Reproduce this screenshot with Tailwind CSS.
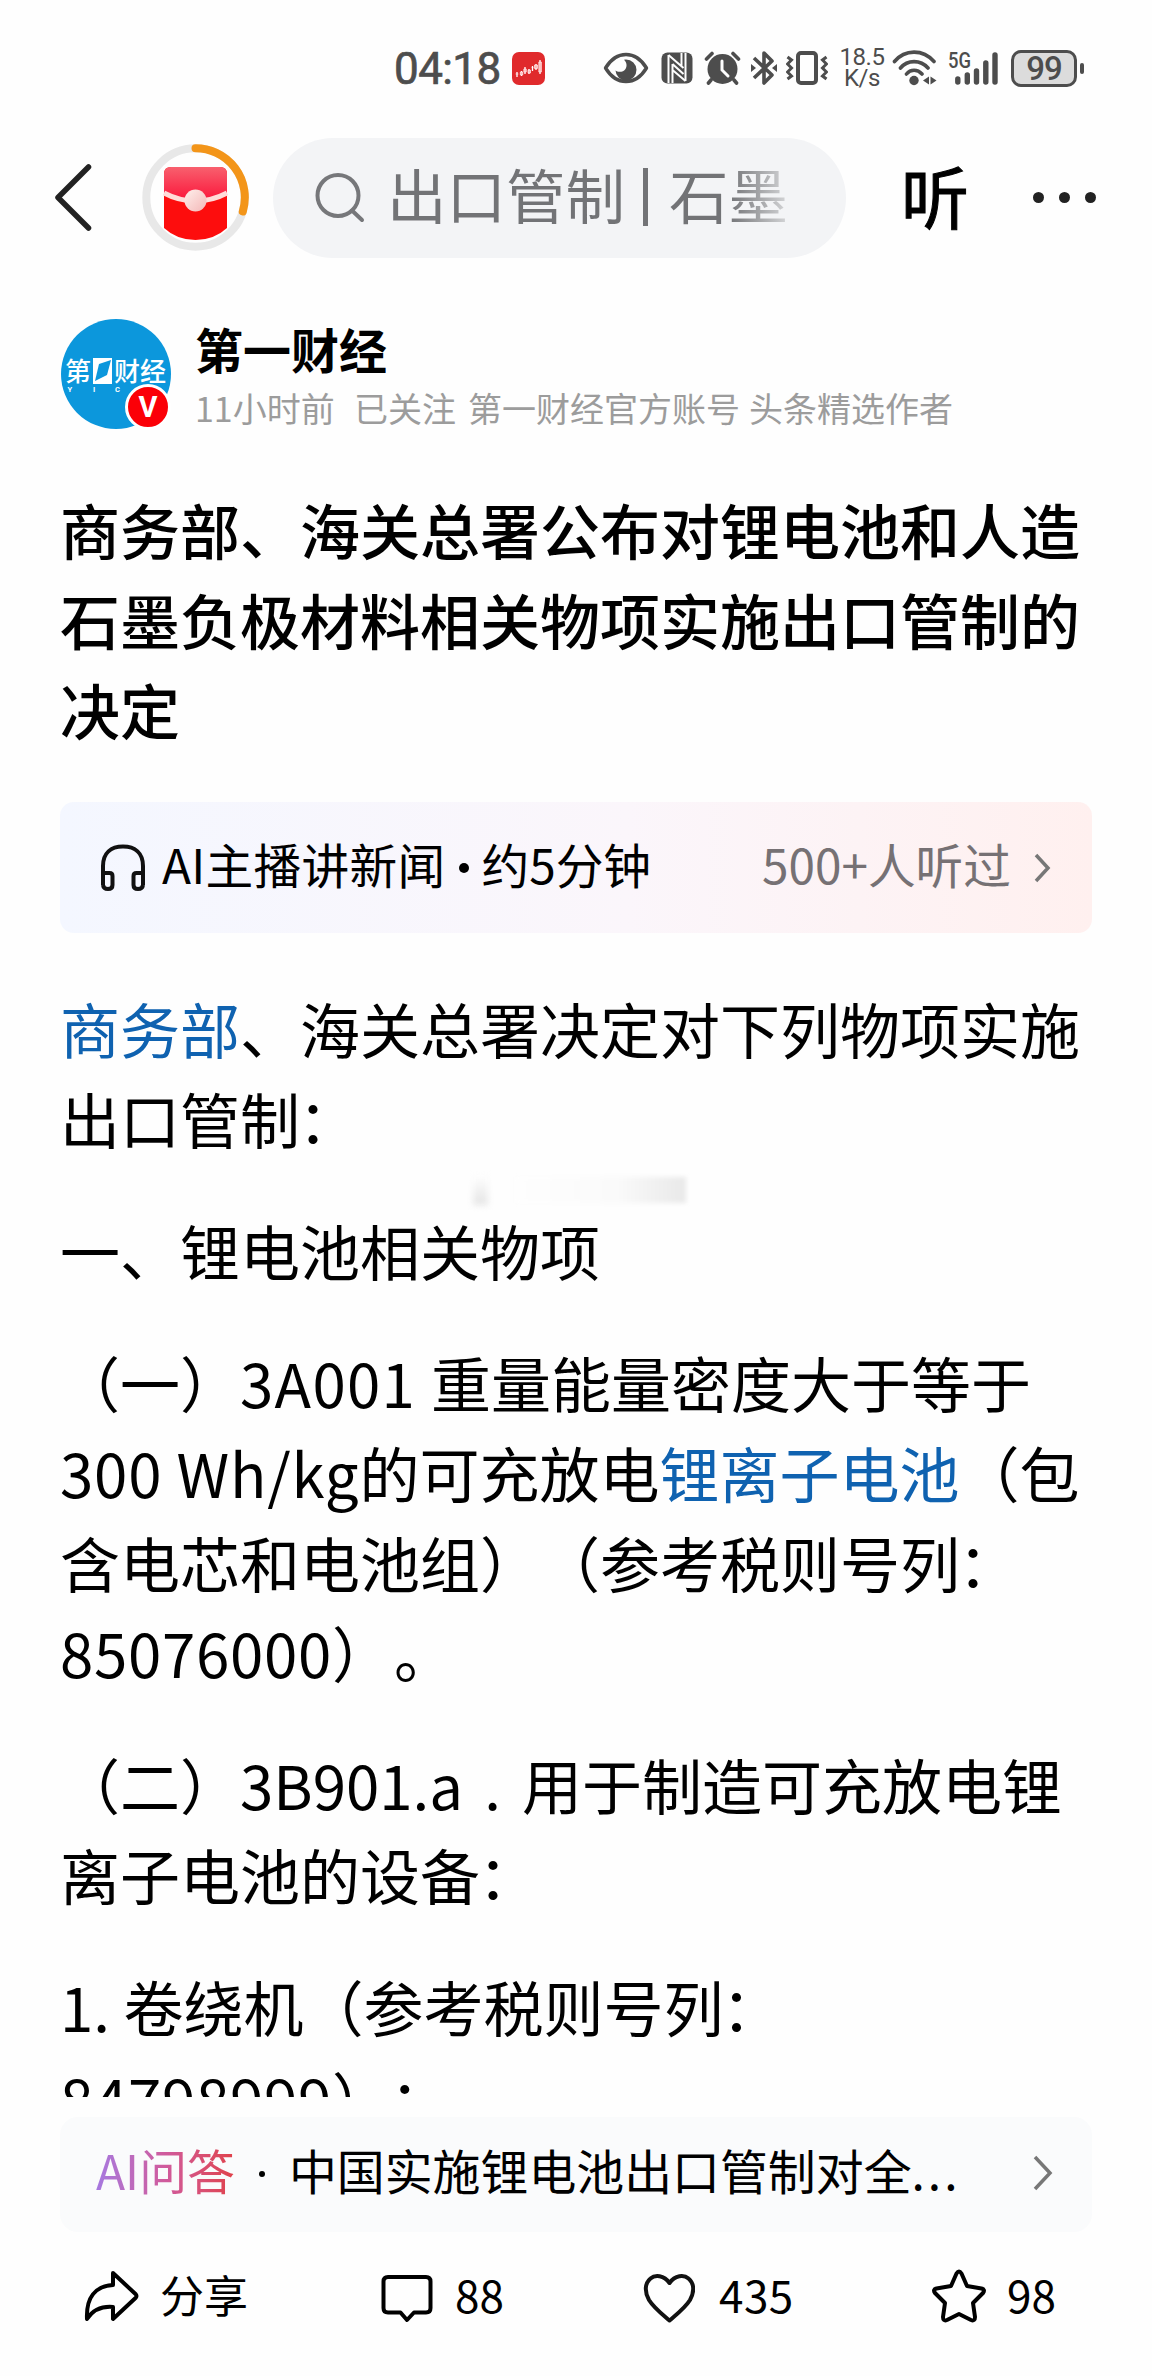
<!DOCTYPE html>
<html lang="zh-CN">
<head>
    <meta charset="UTF-8">
    <meta name="viewport" content="width=device-width, initial-scale=1.0">
    <title>第一财经</title>
    <script src="https://cdn.jsdelivr.net/npm/@tailwindcss/browser@4"></script>
</head>
<body class="bg-[#fefefe]">
<div class="relative flex flex-col w-[1152px] h-[2376px] overflow-hidden text-black font-['Noto_Sans_CJK_SC',sans-serif] [text-spacing-trim:space-all]">

    <!-- Status bar -->
    <div class="flex items-center h-[136px] shrink-0 pl-[394px] text-[#4d4d4d]">
        <span class="w-[118px] pt-[2px] font-['Roboto'] text-[44px] leading-none tracking-[-0.6px] [-webkit-text-stroke:0.7px_currentColor]">04:18</span>
        <svg class="w-[33px] h-[33px]" viewBox="0 0 33 33">
            <rect width="33" height="33" rx="7" fill="#e02a2c"/>
            <path d="M5 20v5M9.500 19v5M13 15v7M17 17v5M20.500 14v5M24 12v6M28 8v14" stroke="#fff" stroke-width="1.300"/>
            <path d="M3.500 22h3M8.300 20h2.500v3H8.300zM11.800 17h2.500v3h-2.500zM16 18h2.500v3H16zM19.500 15.500h2M22.500 13h3v3.500h-3zM26.800 10h2.600v10h-2.600z" fill="#fbb" stroke="#fff" stroke-width=".6"/>
        </svg>
        <!-- eye -->
        <svg class="ml-[58px] w-[46px] h-[32px]" viewBox="0 0 46 32" fill="none">
            <path d="M2.500 16C8 7 15 2.500 23 2.500S38 7 43.500 16C38 25 31 29.500 23 29.500S8 25 2.500 16Z" stroke="currentColor" stroke-width="3.400" stroke-linejoin="round"/>
            <path d="M23 7.500a10.500 10.500 0 1 1-10.500 11c2 2 8 2 10-1.500 2-3.500 1-7-1.500-9.300Z" fill="currentColor"/>
        </svg>
        <!-- nfc -->
        <svg class="ml-[12px] w-[32px] h-[32px]" viewBox="0 0 32 32">
            <rect x=".5" y=".5" width="31" height="31" rx="6" fill="currentColor"/>
            <path d="M7.500 31V3M24.500 1v28" stroke="#fefefe" stroke-width="2"/>
            <path d="M7.500 3l15 13M11.500 12l11 10M11.500 18l13 11M11.500 12v19M20.500 1v13" stroke="#fefefe" stroke-width="2"/>
        </svg>
        <!-- alarm -->
        <svg class="ml-[11px] w-[37px] h-[35px]" viewBox="0 0 37 35" fill="none" stroke-linecap="round">
            <circle cx="18.500" cy="18" r="15" fill="currentColor"/>
            <path d="M2.500 8L8 2.500M34.500 8L29 2.500M7 29l-2.500 3M30 29l2.500 3" stroke="currentColor" stroke-width="3.600"/>
            <path d="M18 10v9l6 6" stroke="#fefefe" stroke-width="3"/>
        </svg>
        <!-- bluetooth -->
        <svg class="ml-[10px] w-[26px] h-[36px]" viewBox="0 0 26 36" fill="none">
            <path d="M3 8l18 17-8 8V3l8 8L3 28" stroke="currentColor" stroke-width="3.600" stroke-linejoin="round"/>
            <path d="M0 14l5 4-5 4zM26 14l-5 4 5 4z" fill="currentColor"/>
        </svg>
        <!-- vibrate -->
        <svg class="ml-[9px] w-[42px] h-[34px]" viewBox="0 0 42 34" fill="none" stroke="currentColor">
            <rect x="12" y="2" width="18" height="30" rx="3" stroke-width="4"/>
            <path d="M1.500 6l4 3-4 4 4 4-4 4 4 4-4 3M40.500 6l-4 3 4 4-4 4 4 4-4 4 4 3" stroke-width="3"/>
        </svg>
        <div class="ml-[9px] w-[50px] text-center font-['Roboto'] text-[24px] leading-[21px] tracking-[-0.5px]">18.5<br>K/s</div>
        <!-- wifi -->
        <svg class="ml-[5px] w-[46px] h-[36px]" viewBox="0 0 46 36" fill="none">
            <path d="M2.500 11.500C13-1 31-1 42 11.500M8.500 18c7-8.500 20-8.500 27.500 0M14.500 24c4-5 11-5 15.500 0" stroke="currentColor" stroke-width="3.600" stroke-linecap="round"/>
            <circle cx="22" cy="30.500" r="4.700" fill="currentColor"/>
            <path d="M31 30.500l6-4v8zM44.500 30.500l-6-4v8z" fill="currentColor"/>
        </svg>
        <!-- mobile signal -->
        <svg class="ml-[10px] w-[51px] h-[36px] overflow-visible" viewBox="0 0 51 36">
            <text x="0" y="18" font-family="Roboto" font-weight="500" font-size="22" textLength="23" lengthAdjust="spacingAndGlyphs" fill="currentColor">5G</text>
            <path d="M9.800 29v3M19.300 25v7M28.500 21v11M37.800 13v19M47 5v27" stroke="currentColor" stroke-width="5.400" stroke-linecap="round"/>
        </svg>
        <div class="ml-[12px] flex items-center justify-center w-[66px] h-[37px] rounded-[10px] border-[3px] border-current bg-[#dcdcdc] font-['Roboto'] font-medium text-[33px] leading-none tracking-[-1px]">99</div>
        <div class="ml-[3px] w-[4px] h-[11px] rounded-full bg-[#4d4d4d]"></div>
    </div>

    <!-- Search header -->
    <div class="flex items-center h-[124px] shrink-0 pl-[54px]">
        <svg class="w-[38px] h-[68px]" viewBox="0 0 38 68" fill="none"><path d="M34.500 3L4 33.500 34.500 64" stroke="#222" stroke-width="5.500" stroke-linecap="round" stroke-linejoin="round"/></svg>
        <svg class="ml-[50px] -mt-[1px] w-[107px] h-[107px]" viewBox="0 0 107 107" fill="none">
            <defs>
                <linearGradient id="flap" x1="0" y1="0" x2="0" y2="1"><stop stop-color="#f8606e"/><stop offset="1" stop-color="#fb1238"/></linearGradient>
                <linearGradient id="seal" x1="0" y1="0" x2="1" y2="1"><stop stop-color="#fff0ec"/><stop offset="1" stop-color="#f3b7b7"/></linearGradient>
            </defs>
            <circle cx="53.500" cy="53.500" r="49.200" stroke="#e8e8e8" stroke-width="8"/>
            <path d="M53.500 4.300A49.200 49.200 0 0 1 100.800 67.500" stroke="#f39519" stroke-width="8" stroke-linecap="round"/>
            <path d="M22 30q0-7 7-7h49q7 0 7 7v54q-13 12-31.500 12T22 84Z" fill="#fd0d0d"/>
            <path d="M22 30q0-7 7-7h49q7 0 7 7v20q-15 8-31.500 8T22 50Z" fill="url(#flap)"/>
            <path d="M22 49q15 8 31.500 8T85 49" stroke="#ffdcd9" stroke-width="5"/>
            <circle cx="53.500" cy="56.500" r="11" fill="url(#seal)"/>
        </svg>
        <div class="ml-[24px] flex items-center w-[573px] h-[120px] rounded-full bg-[#f3f4f6] pl-[42px]">
            <svg class="w-[50px] h-[50px]" viewBox="0 0 50 50" fill="none" stroke="#76777a" stroke-width="4" stroke-linecap="round"><circle cx="23" cy="22.500" r="20.500"/><path d="M37 37.500l10 9.500"/></svg>
            <div class="ml-[22px] -mt-[10px] flex items-center text-[59.500px] leading-[90px] text-transparent bg-clip-text bg-linear-to-r from-[#727376] from-85% to-[#d5d6d8]">
                <span>出口管制</span><span class="ml-[18px] mr-[21px] mt-[7px] w-[5px] h-[58px] bg-[#727376]"></span><span>石墨</span>
            </div>
        </div>
        <span class="ml-[55px] -mt-[7px] text-[68px] leading-[90px] [-webkit-text-stroke:1px_#000]">听</span>
        <div class="ml-[64px] -mt-[2px] flex gap-[15px]">
            <span class="size-[11px] rounded-full bg-[#222]"></span>
            <span class="size-[11px] rounded-full bg-[#222]"></span>
            <span class="size-[11px] rounded-full bg-[#222]"></span>
        </div>
    </div>

    <!-- Scrolling article, cut off above the AI bar -->
    <div class="relative h-[1837px] shrink-0 overflow-hidden px-[60px] pt-[59px]">
        <div class="flex h-[110px]">
            <div class="relative w-[111px] h-[110px] shrink-0">
                <svg class="ml-px w-[110px] h-[110px]" viewBox="0 0 110 110">
                    <circle cx="55" cy="55" r="55" fill="#0c97dc"/>
                    <g fill="#fff" font-family="Noto Sans CJK SC" font-weight="500">
                        <text x="4" y="62" font-size="26">第</text>
                        <text x="53" y="62" font-size="26">财经</text>
                    </g>
                    <g fill="#fff" font-family="Roboto" font-weight="700" font-size="7.500">
                        <text x="6.500" y="73">Y</text>
                        <text x="32" y="73">I</text>
                        <text x="54" y="73">C</text>
                    </g>
                    <rect x="32" y="39" width="19" height="26" fill="#fff"/>
                    <path d="M34 62l4-17 12-4-4 15z" fill="#0c97dc"/>
                </svg>
                <span class="absolute left-[65px] top-[65px] flex items-center justify-center w-[46px] h-[46px] rounded-full border-[3px] border-white bg-[#fb0007] text-white font-['Roboto'] font-bold text-[29px] leading-none">V</span>
            </div>
            <div class="ml-[24px]">
                <div class="text-[48px] leading-[58px] font-bold">第一财经</div>
                <div class="flex pt-[3px] text-[34px] leading-[56px] text-[#9c9c9c] whitespace-nowrap">
                    <span class="w-[159px]">11小时前</span><span class="w-[114px]">已关注</span><span class="w-[281px]">第一财经官方账号</span><span>头条精选作者</span>
                </div>
            </div>
        </div>

        <h1 class="mt-[55px] w-[1040px] text-[60px] leading-[90px] font-medium">商务部、海关总署公布对锂电池和人造石墨负极材料相关物项实施出口管制的决定</h1>

        <div class="mt-[48px] flex items-center h-[131px] rounded-[14px] pl-[40px] pr-[41px] text-[47.700px] bg-linear-to-r from-[#f4f7ff] via-[#fbf6fb] via-55% to-[#fff0ef]">
            <svg class="w-[46px] h-[48px] mb-px" viewBox="0 0 46 48" fill="none" stroke="#111" stroke-width="4" stroke-linejoin="round">
                <path d="M3 42V23C3 10 11 3.500 23 3.500S43 10 43 23v19"/>
                <path d="M3 30h6.500q3 0 3 3v9q0 4-4.500 4T3 42M43 30h-6.500q-3 0-3 3v9q0 4 4.500 4t5-4"/>
            </svg>
            <span class="ml-[16px] -mt-[8px] tracking-[0.300px]">AI主播讲新闻</span>
            <span class="ml-[13px] mr-[13px] size-[10px] rounded-full bg-black"></span>
            <span class="-mt-[8px]">约5分钟</span>
            <span class="ml-auto -mt-[8px] text-[#767174]">500+人听过</span>
            <svg class="ml-[23px] w-[17px] h-[30px]" viewBox="0 0 17 30" fill="none" stroke="#777" stroke-width="3.500"><path d="M2 2l12 13L2 28"/></svg>
        </div>

        <div class="mt-[50px] w-[1040px] flex flex-col gap-[42.500px] text-[60px] leading-[89.800px]">
            <p><span class="text-[#0f62b0]">商务部</span>、海关总署决定对下列物项实施<br>出口管制<span class="-ml-[2px]">：</span></p>
            <p>一、锂电池相关物项</p>
            <p>（一）<span class="tracking-[1.300px]">3A001 </span>重量能量密度大于等于<br><span class="tracking-[0.800px]">300 Wh/kg</span>的可充放电<span class="text-[#0f62b0]">锂离子电池</span>（包<br>含电芯和电池组）（参考税则号列<span class="-ml-[2px]">：</span><br><span class="tracking-[0.700px]">85076000</span>）<span class="ml-[2px]">。</span></p>
            <p>（二）3B901.a<span class="inline-block w-[59px] text-center">.</span>用于制造可充放电锂<br>离子电池的设备<span class="-ml-[2px]">：</span></p>
            <p>1. 卷绕机（参考税则号列<span class="-ml-[2px]">：</span><br><span class="inline-block pt-[2px] tracking-[0.700px]">84798999）<span class="-ml-[3px]">；</span></span></p>
        </div>

        <!-- faded image placeholder -->
        <div class="absolute left-[473px] top-[915px] w-[15px] h-[30px] blur-[3px] bg-linear-to-b from-white to-[#e4e4e4]"></div>
        <div class="absolute left-[515px] top-[917px] w-[171px] h-[26px] blur-[2px] bg-linear-to-r from-[#fefefe] via-[#fafafa] via-60% to-[#e9e9e9]"></div>
    </div>

    <!-- AI question bar -->
    <div class="mt-[20px] mx-[60px] flex items-center h-[115px] shrink-0 rounded-[18px] bg-[#fafbfc] pl-[36px] pr-[39px] text-[47.900px]">
        <span class="-mt-[9px] text-transparent bg-clip-text bg-linear-to-r from-[#a678e0] via-[#d05a9c] to-[#e04048]">AI问答</span>
        <span class="mx-[24px] -mt-[2px] size-[6px] rounded-full bg-black"></span>
        <span class="-mt-[9px]">中国实施锂电池出口管制对全<span class="tracking-[3px]">...</span></span>
        <svg class="ml-auto -mt-[4px] w-[20px] h-[36px]" viewBox="0 0 20 36" fill="none" stroke="#777" stroke-width="3.500"><path d="M2 2l15 16L2 34"/></svg>
    </div>

    <!-- Bottom actions -->
    <div class="mt-[29px] flex items-center h-[70px] pl-[84px] text-[44px] leading-[70px]">
        <div class="flex items-center w-[296px]">
            <svg class="w-[56px] h-[52px] mr-[20px]" viewBox="0 0 56 52" fill="none" stroke="#000" stroke-width="4" stroke-linejoin="round"><path d="M29 3l22.500 21q2 2 0 4L29 49V37C17 36 9 40 3 49 2 28 11 16 29 15Z"/></svg>
            <span class="-mt-[5px]">分享</span>
        </div>
        <div class="flex items-center w-[263px]">
            <svg class="w-[54px] h-[50px] mt-[4px] mr-[21px]" viewBox="0 0 54 50" fill="none" stroke="#000" stroke-width="4" stroke-linejoin="round"><path d="M8 4h38q4.500 0 4.500 4.500V35q0 4.500-4.500 4.500H34L27 47l-6.500-7.500H8q-4.500 0-4.500-4.500V8.500Q3.500 4 8 4Z"/></svg>
            <span class="-mt-[5px]">88</span>
        </div>
        <div class="flex items-center w-[288px]">
            <svg class="w-[52px] h-[50px] mt-[3px] mr-[24px]" viewBox="0 0 52 50" fill="none" stroke="#111" stroke-width="4" stroke-linejoin="round"><path d="M26.500 10C21 2 12 1.500 7.500 5.500 1 11 2 20 6 27c5 8 13 14 20.500 20.500C34 41 42 35 47 27c4-7 5-16-1.500-21.500C41 1.500 32 2 26.500 10Z"/></svg>
            <span class="-mt-[5px] tracking-[0.500px]">435</span>
        </div>
        <div class="flex items-center">
            <svg class="w-[56px] h-[54px] mr-[20px]" viewBox="0 0 56 54" fill="none" stroke="#000" stroke-width="4" stroke-linejoin="round"><path d="M25.500 4.500q2.500-4 5 0L36 17l14.500 2.500q4 1 1.500 4.500L42 34l2 14q0 4.500-4 3L28 45l-12 6q-4 1.500-4-3l2-14L4 24q-2.500-3.500 1.500-4.500L20 17Z"/></svg>
            <span class="-mt-[5px]">98</span>
        </div>
    </div>
</div>
</body>
</html>
